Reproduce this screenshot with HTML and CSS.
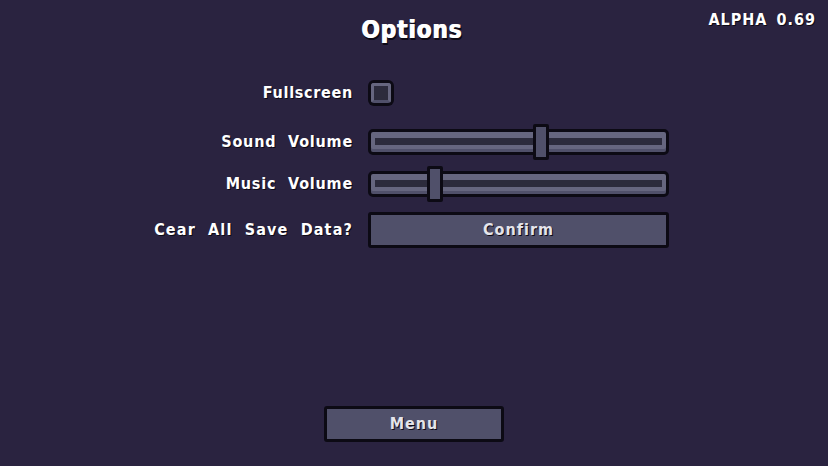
FILE: index.html
```html
<!DOCTYPE html>
<html lang="en">
<head>
  <meta charset="UTF-8">
  <meta name="viewport" content="width=device-width, initial-scale=1.0">
  <title>Options</title>
  <link rel="stylesheet" href="styles.css">
</head>
<body>

  <div class="screen">
    <div class="version">ALPHA 0.69</div>
    <h1 class="title">Options</h1>

    <div class="options">
      <label class="option-label label-fullscreen">Fullscreen</label>
      <div class="checkbox"></div>

      <label class="option-label">Sound Volume</label>
      <div class="slider">
        <div class="slider-well"></div>
        <div class="slider-thumb" style="left: 162px"></div>
      </div>

      <label class="option-label">Music Volume</label>
      <div class="slider">
        <div class="slider-well"></div>
        <div class="slider-thumb" style="left: 56px"></div>
      </div>

      <label class="option-label label-clear">Cear All Save Data?</label>
      <button class="btn btn-confirm">Confirm</button>
    </div>

    <div class="footer">
      <button class="btn btn-menu">Menu</button>
    </div>
  </div>

</body>
</html>
```

FILE: styles.css
```css
body {
  margin: 0;
  padding: 0;
  background-color: #2a2340;
  font-family: "DejaVu Sans", "Liberation Sans", sans-serif;
  font-stretch: condensed;
  font-weight: bold;
  color: #fff;
}

.screen {
  position: relative;
  width: 828px;
  height: 466px;
  overflow: hidden;
  display: flex;
  flex-direction: column;
}

.version {
  position: absolute;
  top: 10px;
  right: 12px;
  font-size: 16px;
  line-height: 20px;
  letter-spacing: 1px;
  word-spacing: 3px;
  text-shadow: 1px 1px 0 #0d0a16;
}

.title {
  margin: 0;
  height: 60px;
  padding: 16px 5px 0 0;
  box-sizing: border-box;
  text-align: center;
  font-size: 24px;
  line-height: 28px;
  letter-spacing: 0.9px;
  text-shadow: 1px 0 0 #fff, 2px 2px 0 #0d0a16, 1px 2px 0 #0d0a16;
}

.options {
  display: grid;
  grid-template-columns: 353px 301px;
  grid-template-rows: 38px 36px 36px 40px;
  column-gap: 15px;
  row-gap: 6px;
  margin-top: 20px;
  align-items: center;
}

.option-label {
  text-align: right;
  font-size: 16px;
  line-height: 20px;
  letter-spacing: 0.8px;
  word-spacing: 6px;
  text-shadow: 1px 1px 0 #0d0a16;
}

.label-fullscreen {
  align-self: start;
  padding-top: 3px;
  letter-spacing: 0.7px;
}

.label-clear {
  align-self: end;
  padding-bottom: 8px;
  letter-spacing: 1.15px;
  word-spacing: 6px;
}

.checkbox {
  align-self: start;
  width: 14px;
  height: 14px;
  margin: 3px;
  background: #2c2b3c;
  border: 3px solid #66667f;
  border-bottom-color: #50506a;
  border-radius: 3px;
  box-shadow: 0 0 0 3px #0c0a14;
}

.slider {
  position: relative;
  box-sizing: border-box;
  height: 26px;
  background: #66667f;
  border: 3px solid #0c0a14;
  border-radius: 5px;
  padding: 6px 4px 7px;
  box-shadow: inset 0 -3px 0 #50506a;
}

.slider-well {
  height: 100%;
  background: #2c2b3c;
}

.slider-thumb {
  position: absolute;
  top: -8px;
  width: 10px;
  height: 30px;
  background: #50506a;
  border: 3px solid #0c0a14;
  border-radius: 2px;
}

.btn {
  display: block;
  box-sizing: border-box;
  height: 36px;
  padding: 0 0 2px;
  background: #50506a;
  border: 3px solid #0c0a14;
  border-radius: 3px;
  font-family: inherit;
  font-weight: bold;
  font-size: 16px;
  font-stretch: condensed;
  color: #e4e4ea;
  text-shadow: 1px 1px 0 #0d0a16;
}

.btn-confirm {
  width: 301px;
  align-self: end;
  letter-spacing: 1px;
}

.footer {
  margin-top: auto;
  padding-bottom: 24px;
  display: flex;
  justify-content: center;
}

.btn-menu {
  width: 180px;
  letter-spacing: 1px;
}
```
